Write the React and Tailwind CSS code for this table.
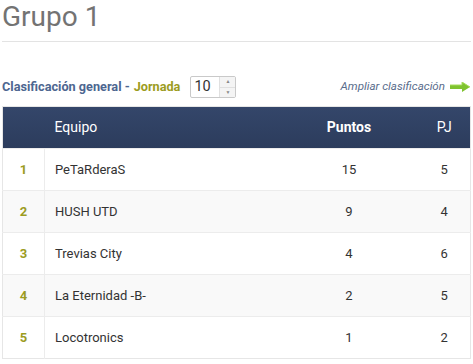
import { useState } from 'react'

const rows = [
  { pos: 1, team: 'PeTaRderaS', pts: 15, pj: 5 },
  { pos: 2, team: 'HUSH UTD', pts: 9, pj: 4 },
  { pos: 3, team: 'Trevias City', pts: 4, pj: 6 },
  { pos: 4, team: 'La Eternidad -B-', pts: 2, pj: 5 },
  { pos: 5, team: 'Locotronics', pts: 1, pj: 2 },
]

const App = () => {
  const [jornada] = useState(10)

  return (
    <div className="w-[473px] h-[364px] overflow-hidden bg-white font-['Roboto',sans-serif]">
      <div className="px-[2px]">
        <h2 className="text-[28px] leading-[33px] text-[#737373]">Grupo 1</h2>
        <div className="mt-[8px] h-px bg-[#e3e3e3]" />

        {/* barra de opciones */}
        <div className="flex items-center justify-between mt-[33px] h-[24px]">
          <div className="flex items-center text-[12.7px] font-bold">
            <span className="text-[#4d6690]">Clasificación general -</span>
            <span className="text-[#9c9c1f] ml-[4px]">Jornada</span>
            <div className="ml-[10px] flex w-[46px] h-[22px] border border-[#c9c9c9] rounded-[2px] bg-white">
              <span className="flex-1 pl-[3px] text-[14.5px] font-normal text-[#333] leading-[20px]">{jornada}</span>
              <div className="w-[16px] flex flex-col border-l border-[#e0e0e0] bg-[#f4f4f4]">
                <span className="flex-1 flex items-center justify-center text-[5px] text-[#888] border-b border-[#e0e0e0]">▲</span>
                <span className="flex-1 flex items-center justify-center text-[5px] text-[#888]">▼</span>
              </div>
            </div>
          </div>
          <div className="flex items-center gap-[5px] pr-[1px]">
            <span className="text-[11.6px] italic text-[#5a6d8c]">Ampliar clasificación</span>
            <svg width="20" height="10" viewBox="0 0 20 10">
              <path d="M0 3h12V0l8 5-8 5V7H0z" fill="#7fc32f" />
              <path d="M0 3h12V0l8 5" fill="none" stroke="#a6dd5a" strokeWidth="1" />
            </svg>
          </div>
        </div>

        {/* tabla */}
        <table className="mt-[7px] w-[469px] border-collapse text-[13px] text-[#333] border border-[#e6e6e6]">
          <thead>
            <tr className="h-[42px] bg-gradient-to-b from-[#34466a] to-[#2c3c5c] text-white text-[14px]">
              <th className="w-[42px]"></th>
              <th className="text-left font-normal pl-[10px]">Equipo</th>
              <th className="w-[139px] font-bold">Puntos</th>
              <th className="w-[52px] font-normal">PJ</th>
            </tr>
          </thead>
          <tbody>
            {rows.map((r, i) => (
              <tr key={r.pos} className={`h-[42px] border-t border-[#ececec] ${i % 2 === 1 ? 'bg-[#f9f9f9]' : 'bg-white'}`}>
                <td className="text-center font-bold text-[#9c9c1f] border-r border-[#ececec]">{r.pos}</td>
                <td className="pl-[10px]">{r.team}</td>
                <td className="text-center">{r.pts}</td>
                <td className="text-center">{r.pj}</td>
              </tr>
            ))}
          </tbody>
        </table>
      </div>
    </div>
  )
}

export default App
